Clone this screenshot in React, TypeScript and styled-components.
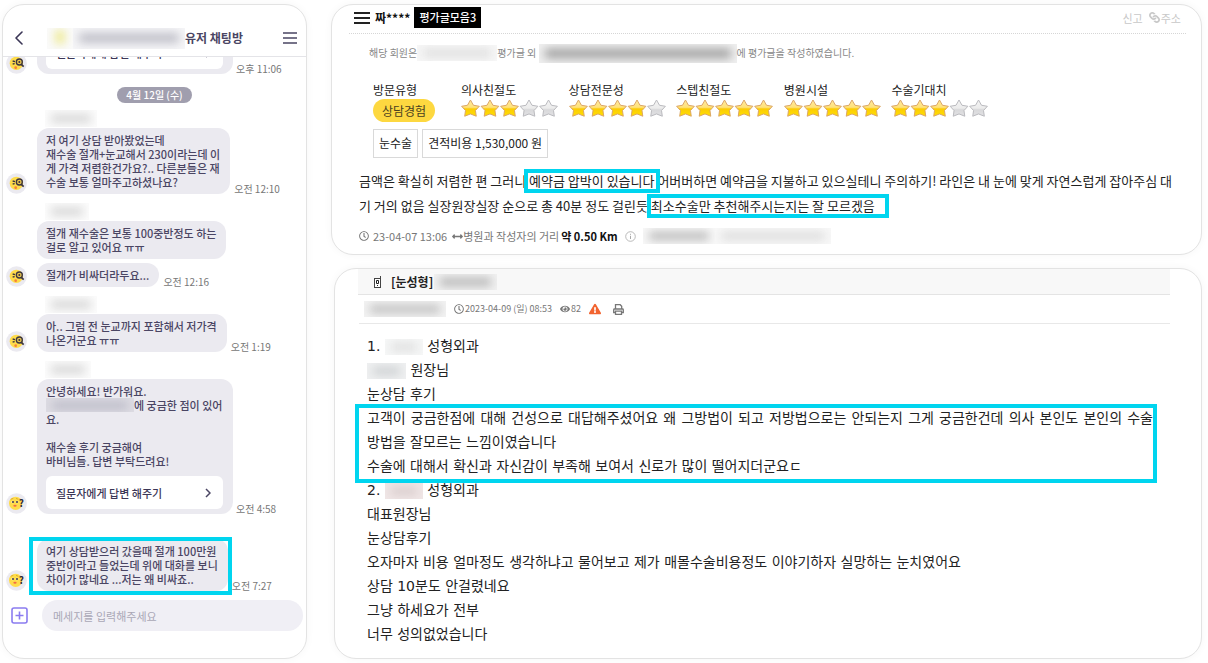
import React from "react";
import styled, { createGlobalStyle } from "styled-components";
import { FaArrowsAltH, FaExclamationTriangle, FaEye, FaLink, FaRegClock } from "react-icons/fa";

const GlobalStyle = createGlobalStyle`
  * { box-sizing: border-box; }
  body {
    margin: 0;
    background: #fff;
    font-family: "Noto Sans CJK KR", "Noto Sans", sans-serif;
    color: #222;
  }
  button { font-family: inherit; border: 0; padding: 0; background: none; cursor: pointer; }
  h1, h2, p { margin: 0; }
`;

const CYAN = "#00d5ef";

/* ---------- shared ---------- */

const Page = styled.main`
  display: grid;
  grid-template-columns: 305px minmax(0, 1fr);
  gap: 24px;
  min-height: 100vh;
  padding: 4px 6px 4px 2px;
`;

const Card = styled.section`
  background: #fff;
  border: 1px solid #e3e3e3;
  border-radius: 22px;
  box-shadow: 0 0 8px rgba(0, 0, 0, 0.04);
  overflow: hidden;
`;

const Redacted = styled.span<{ $w: number; $h?: number; $tone?: string; $bg?: string }>`
  display: inline-block;
  flex: none;
  width: ${(p) => p.$w}px;
  height: ${(p) => p.$h ?? 16}px;
  background: ${(p) => p.$bg ?? "#f7f7f7"};
  overflow: hidden;
  vertical-align: middle;
  &::before {
    content: "";
    display: block;
    height: 50%;
    margin: ${(p) => Math.round((p.$h ?? 16) / 4)}px 6px;
    background: ${(p) => p.$tone ?? "#ccc"};
    filter: blur(5px);
  }
`;

const Marked = styled.mark<{ $inset: string }>`
  position: relative;
  background: none;
  color: inherit;
  &::after {
    content: "";
    position: absolute;
    inset: ${(p) => p.$inset};
    border: 4px solid ${CYAN};
    pointer-events: none;
  }
`;

/* ---------- chat ---------- */

const ChatCard = styled(Card)`
  display: flex;
  flex-direction: column;
  color: #4a4563;
`;

const ChatHeader = styled.header`
  display: flex;
  align-items: center;
  height: 52px;
  flex: none;
  padding: 15px 9px 0 12px;
  border-bottom: 1px solid #e4e4e8;
`;

const IconButton = styled.button`
  display: flex;
  flex: none;
`;

const RoomName = styled.h1`
  display: flex;
  align-items: center;
  flex: 1;
  margin-left: 24px;
  font-size: 12px;
  line-height: 20px;
  font-weight: 700;
`;

const RoomPhoto = styled.span`
  display: flex;
  width: 26px;
  height: 21px;
  background: #fafafa;
  overflow: hidden;
  &::before {
    content: "";
    width: 12px;
    height: 14px;
    margin: 2px 8px;
    background: #efeb9c;
    filter: blur(4px);
  }
`;

const Messages = styled.div`
  display: flex;
  flex-direction: column;
  justify-content: flex-end;
  flex: 1 1 0;
  min-height: 0;
  overflow: hidden;
  padding: 0 3px 5px;
`;

const MessageRow = styled.div<{ $gap?: number }>`
  display: flex;
  align-items: flex-end;
  flex: none;
  margin-top: ${(p) => p.$gap ?? 9}px;
`;

const AvatarSvg = styled.svg`
  flex: none;
  width: 21px;
  height: 21px;
  margin-right: 10px;
`;

const BubbleStack = styled.div<{ $indent?: boolean }>`
  display: flex;
  flex-direction: column;
  align-items: flex-start;
  max-width: 195px;
  margin-left: ${(p) => (p.$indent ? 31 : 0)}px;
`;

const SenderName = styled.div`
  height: 17px;
  margin: 0 0 1px 8px;
  line-height: 0;
`;

const Bubble = styled.div`
  padding: 5px 10px 5px 9px;
  border-radius: 12px;
  background: #ebeaf0;
  font-size: 11px;
  line-height: 14px;
  font-weight: 500;
  white-space: pre-line;
`;

const InlineRedacted = styled(Redacted)`
  vertical-align: top;
`;

const ReplyButton = styled.button`
  display: flex;
  align-items: center;
  justify-content: space-between;
  width: 177px;
  height: 33px;
  margin-top: 8px;
  padding: 0 12px 0 10px;
  border-radius: 6px;
  background: #fff;
  color: #3b3656;
  font-size: 11px;
  font-weight: 500;
`;

const Time = styled.time`
  margin-left: 4px;
  color: #777;
  font-size: 10px;
  line-height: 10px;
  white-space: nowrap;
`;

const DatePill = styled.div`
  align-self: center;
  flex: none;
  margin: 13px 0 -2px;
  padding: 0 9px;
  border-radius: 8px;
  background: #a09eae;
  color: #fff;
  font-size: 10px;
  line-height: 16px;
  font-weight: 500;
`;

const Composer = styled.form`
  display: flex;
  align-items: center;
  gap: 14px;
  flex: none;
  padding: 4px 3px 27px 8px;
`;

const MessageInput = styled.input`
  flex: 1;
  min-width: 0;
  height: 31px;
  padding: 0 11px;
  border: 0;
  border-radius: 16px;
  background: #f0eff5;
  font-family: inherit;
  font-size: 11px;
  &::placeholder { color: #a9a7b5; opacity: 1; }
`;

function SearchAvatar() {
  return (
    <AvatarSvg viewBox="0 0 63 63" aria-hidden="true">
      <circle cx="31.500" cy="31.500" r="31" fill="#ebeaf0" />
      <circle cx="31" cy="31" r="20" fill="#ffdc4a" />
      <path d="M20 24l7 2M20 33l6-1" stroke="#3c3640" strokeWidth="4" />
      <circle cx="40" cy="27" r="9" fill="#e9c64c" stroke="#3c3640" strokeWidth="4" />
      <circle cx="40" cy="27" r="3" fill="#3c3640" />
      <path d="M46 34l7 7" stroke="#3c3640" strokeWidth="5" />
      <circle cx="29" cy="44" r="4" fill="#f6813c" />
    </AvatarSvg>
  );
}

function QuestionAvatar() {
  return (
    <AvatarSvg viewBox="0 0 63 63" aria-hidden="true">
      <circle cx="31.500" cy="31.500" r="31" fill="#ebeaf0" />
      <circle cx="29" cy="31" r="20" fill="#ffdc4a" />
      <circle cx="20" cy="27" r="4" fill="#fff3c0" />
      <circle cx="33" cy="27" r="4" fill="#fff3c0" />
      <circle cx="21" cy="27" r="3" fill="#3c3640" />
      <circle cx="33" cy="27" r="3" fill="#3c3640" />
      <path d="M14 19l8-3M30 16l7 3" stroke="#c79422" strokeWidth="2" />
      <ellipse cx="27" cy="38" rx="5" ry="3" fill="#f36d45" />
      <text x="38" y="41" fontSize="30" fontWeight="700" fill="#2f2b3a">?</text>
    </AvatarSvg>
  );
}

function ReplyPrompt() {
  return (
    <ReplyButton type="button">
      질문자에게 답변 해주기
      <svg width="6" height="10" viewBox="0 0 6 10" fill="none" stroke="#4a4563" strokeWidth="1.500">
        <path d="M1 1l4 4-4 4" />
      </svg>
    </ReplyButton>
  );
}

function Sender({ width }: { width: number }) {
  return (
    <SenderName>
      <Redacted $w={width} $h={17} $bg="#fcfcfc" $tone="#d8d8d8" />
    </SenderName>
  );
}

function ChatRoom() {
  return (
    <ChatCard>
      <ChatHeader>
        <IconButton type="button" aria-label="뒤로">
          <svg width="8" height="14" viewBox="0 0 8 14" fill="none" stroke="#3b3656" strokeWidth="1.600" strokeLinecap="round" strokeLinejoin="round">
            <path d="M7 1L1 7l6 6" />
          </svg>
        </IconButton>
        <RoomName>
          <RoomPhoto />
          <Redacted $w={112} $h={21} $bg="#f6f6f8" $tone="#bfbfc8" />
          유저 채팅방
        </RoomName>
        <IconButton type="button" aria-label="메뉴">
          <svg width="14" height="14" viewBox="0 0 14 14" stroke="#4a4563" strokeWidth="1.600">
            <path d="M0 2h14M0 7h14M0 12h14" />
          </svg>
        </IconButton>
      </ChatHeader>

      <Messages>
        <MessageRow>
          <SearchAvatar />
          <BubbleStack>
            <Bubble>
              <ReplyPrompt />
            </Bubble>
          </BubbleStack>
          <Time>오후 11:06</Time>
        </MessageRow>

        <DatePill>4월 12일 (수)</DatePill>

        <MessageRow>
          <SearchAvatar />
          <BubbleStack>
            <Sender width={52} />
            <Bubble>{"저 여기 상담 받아봤었는데\n재수술 절개+눈교해서 230이라는데 이\n게 가격 저렴한건가요?.. 다른분들은 재\n수술 보통 얼마주고하셨나요?"}</Bubble>
          </BubbleStack>
          <Time>오전 12:10</Time>
        </MessageRow>

        <MessageRow>
          <BubbleStack $indent>
            <Sender width={44} />
            <Bubble>{"절개 재수술은 보통 100중반정도 하는\n걸로 알고 있어요 ㅠㅠ"}</Bubble>
          </BubbleStack>
        </MessageRow>
        <MessageRow $gap={4}>
          <SearchAvatar />
          <BubbleStack>
            <Bubble>절개가 비싸더라두요...</Bubble>
          </BubbleStack>
          <Time>오전 12:16</Time>
        </MessageRow>

        <MessageRow>
          <SearchAvatar />
          <BubbleStack>
            <Sender width={52} />
            <Bubble>{"아.. 그럼 전 눈교까지 포함해서 저가격\n나온거군요 ㅠㅠ"}</Bubble>
          </BubbleStack>
          <Time>오전 1:19</Time>
        </MessageRow>

        <MessageRow>
          <QuestionAvatar />
          <BubbleStack>
            <Sender width={46} />
            <Bubble>
              {"안녕하세요! 반가워요.\n"}
              <InlineRedacted $w={88} $h={14} $bg="#dddce3" $tone="#b9b8c5" />
              {"에 궁금한 점이 있어\n요.\n\n재수술 후기 궁금해여\n바비님들. 답변 부탁드려요!"}
              <ReplyPrompt />
            </Bubble>
          </BubbleStack>
          <Time>오전 4:58</Time>
        </MessageRow>

        <MessageRow $gap={25}>
          <QuestionAvatar />
          <BubbleStack>
            <Marked $inset="-2px -4px -4px -8px">
              <Bubble>{"여기 상담받으러 갔을때 절개 100만원\n중반이라고 들었는데 위에 대화를 보니\n차이가 많네요 ...저는 왜 비싸죠.."}</Bubble>
            </Marked>
          </BubbleStack>
          <Time>오전 7:27</Time>
        </MessageRow>
      </Messages>

      <Composer>
        <IconButton type="button" aria-label="첨부">
          <svg width="17" height="17" viewBox="0 0 17 17" fill="none" stroke="#8b7cf0" strokeWidth="1.600">
            <rect x="1" y="1" width="15" height="15" rx="2" />
            <path d="M8.500 4.500v8M4.500 8.500h8" />
          </svg>
        </IconButton>
        <MessageInput aria-label="메세지" placeholder="메세지를 입력해주세요" />
      </Composer>
    </ChatCard>
  );
}

/* ---------- rating review ---------- */

const Reviews = styled.div`
  display: flex;
  flex-direction: column;
  gap: 13px;
  min-width: 0;
`;

const ReviewHeader = styled.header`
  display: flex;
  align-items: center;
  margin: 0 15px 0 17px;
  padding: 2px 5px 5px;
  border-bottom: 1px dotted #d6d6d6;
`;

const Nickname = styled.h2`
  margin: 0 4px 0 5px;
  font-size: 12px;
  line-height: 20px;
  font-weight: 700;
  color: #111;
`;

const CountBadge = styled.a`
  padding: 0 5px;
  background: #000;
  color: #fff;
  font-size: 11px;
  line-height: 21px;
  font-weight: 500;
  text-decoration: none;
`;

const HeaderLinks = styled.nav`
  display: flex;
  gap: 6px;
  margin-left: auto;
`;

const PaleLink = styled.a`
  display: flex;
  align-items: center;
  gap: 1px;
  color: #c8c8c8;
  font-size: 11px;
  line-height: 20px;
  text-decoration: none;
`;

const ChainIcon = styled(FaLink)`
  transform: rotate(90deg);
`;

const Notice = styled.p`
  display: flex;
  align-items: center;
  margin: 9px 22px 0 37px;
  color: #888;
  font-size: 10px;
  line-height: 20px;
  white-space: pre;
`;

const Facts = styled.div`
  display: grid;
  grid-template-columns: 88px minmax(0, 528px);
  margin: 19px 22px 0 41px;
`;

const FactLabel = styled.div`
  margin-bottom: 1px;
  font-size: 12px;
  line-height: 16px;
`;

const VisitType = styled.div`
  width: fit-content;
  padding: 0 9px;
  border-radius: 12px;
  background: #fdd840;
  color: #4a4020;
  font-size: 12px;
  line-height: 23px;
`;

const RatingGrid = styled.div`
  display: grid;
  grid-template-columns: repeat(5, minmax(0, 1fr));
  gap: 10px;
`;

const StarStrip = styled.svg`
  display: block;
  width: 100%;
`;

const Tags = styled.div`
  display: flex;
  gap: 4px;
  margin: 7px 22px 0 41px;
`;

const Tag = styled.span`
  padding: 0 5px 2px;
  border: 1px solid #d9d9d9;
  font-size: 12px;
  line-height: 25px;
`;

const ReviewText = styled.p`
  margin: 10px 22px 0 27px;
  font-size: 13px;
  line-height: 25px;
  word-break: break-all;
`;

const MetaRow = styled.div`
  display: flex;
  align-items: center;
  margin: 10px 22px 10px 27px;
  color: #777;
  font-size: 11px;
  line-height: 16px;
  & > time { margin: 0 5px 0 4px; }
  & > strong { margin: 0 7px 0 2px; color: #111; }
`;

const InfoIcon = styled.svg`
  margin-right: 7px;
`;

const STAR = "M9.500 1L12.500 6.300 18.400 7.300 14.500 11.600 15.300 17.300 9.500 15 3.700 17.300 4.500 11.600.6 7.300 6.500 6.300z";

function Stars({ value }: { value: number }) {
  return (
    <StarStrip viewBox="0 0 98 18" role="img" aria-label={`${value} / 5`}>
      <defs>
        <linearGradient id="gold" x1="0" y1="0" x2="0" y2="1">
          <stop offset="0" stopColor="#ffe9a0" />
          <stop offset="0.450" stopColor="#ffe27a" />
          <stop offset="0.550" stopColor="#fccb05" />
          <stop offset="1" stopColor="#ffe100" />
        </linearGradient>
        <linearGradient id="silver" x1="0" y1="0" x2="0" y2="1">
          <stop offset="0" stopColor="#f4f4f4" />
          <stop offset="0.500" stopColor="#ececec" />
          <stop offset="0.600" stopColor="#d8d8da" />
          <stop offset="1" stopColor="#e2e2e4" />
        </linearGradient>
      </defs>
      {[0, 1, 2, 3, 4].map((i) => (
        <path
          key={i}
          d={STAR}
          transform={`translate(${i * 19.6} 0)`}
          fill={i < value ? "url(#gold)" : "url(#silver)"}
          stroke={i < value ? "#dba566" : "#b9b9bd"}
          strokeWidth="1"
          strokeLinejoin="round"
        />
      ))}
    </StarStrip>
  );
}

const ratings = [
  { label: "의사친절도", value: 3 },
  { label: "상담전문성", value: 4 },
  { label: "스텝친절도", value: 5 },
  { label: "병원시설", value: 5 },
  { label: "수술기대치", value: 3 },
];

function RatingReview() {
  return (
    <Card>
      <ReviewHeader>
        <IconButton type="button" aria-label="목록">
          <svg width="16" height="12" viewBox="0 0 16 12" stroke="#222" strokeWidth="2">
            <path d="M0 1h16M0 6h16M0 11h16" />
          </svg>
        </IconButton>
        <Nickname>짜****</Nickname>
        <CountBadge href="#list">평가글모음3</CountBadge>
        <HeaderLinks>
          <PaleLink href="#report">신고</PaleLink>
          <PaleLink href="#address"><ChainIcon size={11} />주소</PaleLink>
        </HeaderLinks>
      </ReviewHeader>

      <Notice>
        해당 회원은
        <Redacted $w={80} $tone="#dedede" />
        {"평가글 외 "}
        <Redacted $w={198} $h={19} $bg="#f0f0f0" $tone="#9c9c9c" />
        에 평가글을 작성하였습니다.
      </Notice>

      <Facts>
        <div>
          <FactLabel>방문유형</FactLabel>
          <VisitType>상담경험</VisitType>
        </div>
        <RatingGrid>
          {ratings.map((r) => (
            <div key={r.label}>
              <FactLabel>{r.label}</FactLabel>
              <Stars value={r.value} />
            </div>
          ))}
        </RatingGrid>
      </Facts>

      <Tags>
        <Tag>눈수술</Tag>
        <Tag>견적비용 1,530,000 원</Tag>
      </Tags>

      <ReviewText>
        금액은 확실히 저렴한 편 그러니 <Marked $inset="-2px -6px -3px -5px">예약금 압박이 있습니다</Marked>{" "}
        어버버하면 예약금을 지불하고 있으실테니 주의하기! 라인은 내 눈에 맞게 자연스럽게 잡아주심 대기 거의 없음 실장원장실장
        순으로 총 40분 정도 걸린듯 <Marked $inset="-2px -14px -3px -4px">최소수술만 추천해주시는지는 잘 모르겠음</Marked>
      </ReviewText>

      <MetaRow>
        <FaRegClock size={10} />
        <time>23-04-07 13:06</time>
        <FaArrowsAltH size={11} />
        <span>병원과 작성자의 거리</span>
        <strong>약 0.50 Km</strong>
        <InfoIcon width="11" height="11" viewBox="0 0 11 11" fill="none" stroke="#aaa">
          <circle cx="5.500" cy="5.500" r="4.800" strokeWidth="0.800" />
          <path d="M5.500 4.800v3.200M5.500 2.800v1" />
        </InfoIcon>
        <Redacted $w={72} $bg="#f8f8f8" $tone="#b8b8b8" />
        <Redacted $w={116} $bg="#f8f8f8" $tone="#dcdcdc" />
      </MetaRow>
    </Card>
  );
}

/* ---------- board post ---------- */

const PostCard = styled(Card)`
  flex: 1;
  margin-left: 3px;
`;

const PostTitle = styled.header`
  display: flex;
  align-items: center;
  height: 26px;
  margin: 0 31px 0 23px;
  padding-left: 16px;
  border-bottom: 1px solid #e4e4e4;
  background: #f8f8f8;
`;

const PostHeading = styled.h2`
  margin: 0 1px 0 9px;
  font-size: 12px;
  line-height: 20px;
  font-weight: 700;
`;

const PostMeta = styled.div`
  display: flex;
  align-items: center;
  height: 29px;
  margin: 0 31px 0 24px;
  padding-left: 5px;
  border-bottom: 1px solid #e8e8e8;
  color: #777;
  font-size: 9px;
  line-height: 16px;
`;

const MetaItem = styled.span`
  display: flex;
  align-items: center;
  gap: 1px;
  margin-left: 8px;
`;

const PostBody = styled.article`
  padding: 10px 48px 12px 32px;
  color: #222;
  font-family: "DejaVu Sans", "Noto Sans CJK KR", sans-serif;
  font-size: 14px;
  line-height: 24px;
  word-break: keep-all;
`;

const MarkedBlock = styled(Marked)`
  display: block;
  text-align: justify;
`;

function BoardPost() {
  return (
    <PostCard>
      <PostTitle>
        <svg width="8" height="12" viewBox="0 0 8 12" fill="none" stroke="#444">
          <path d="M6.500 0v3" />
          <rect x="0.500" y="2.500" width="6" height="9" fill="#fff" />
          <path d="M2.500 4.500h2v3h-2zM3 9.500h1" stroke="#222" />
        </svg>
        <PostHeading>[눈성형]</PostHeading>
        <Redacted $w={63} $bg="#f1f1f1" $tone="#b4b4b4" />
      </PostTitle>
      <PostMeta>
        <Redacted $w={82} $bg="#f3f3f3" $tone="#bebebe" />
        <MetaItem><FaRegClock size={10} />2023-04-09 (일) 08:53</MetaItem>
        <MetaItem><FaEye size={10} />82</MetaItem>
        <MetaItem><FaExclamationTriangle size={12} color="#f26430" /></MetaItem>
        <MetaItem as="button" type="button" aria-label="인쇄">
          <svg width="19" height="11" viewBox="-4 0 19 11" fill="none" stroke="#777" strokeWidth="1.300">
            <path d="M2.500 5V.7h4.700l1.500 1.500V5" />
            <path d="M2.500 8.500H.7V5.800Q.7 5 1.500 5h8q.8 0 .8.8v2.700H8.500" />
            <path d="M2.500 7.200h6v3.100h-6z" />
          </svg>
        </MetaItem>
      </PostMeta>
      <PostBody>
        <p>1. <Redacted $w={38} $bg="#f6f7f7" $tone="#dedede" /> 성형외과</p>
        <p><Redacted $w={39} $bg="#eff0f1" $tone="#cdd0d2" /> 원장님</p>
        <p>눈상담 후기</p>
        <MarkedBlock $inset="-2px -4px -5px -12px">
          <p>
            고객이 궁금한점에 대해 건성으로 대답해주셨어요 왜 그방법이 되고 저방법으로는 안되는지 그게 궁금한건데 의사 본인도
            본인의 수술 방법을 잘모르는 느낌이였습니다
          </p>
          <p>수술에 대해서 확신과 자신감이 부족해 보여서 신로가 많이 떨어지더군요ㄷ</p>
        </MarkedBlock>
        <p>2. <Redacted $w={38} $bg="#f0e6e6" $tone="#d8cccc" /> 성형외과</p>
        <p>대표원장님</p>
        <p>눈상담후기</p>
        <p>오자마자 비용 얼마정도 생각하냐고 물어보고 제가 매몰수술비용정도 이야기하자 실망하는 눈치였어요</p>
        <p>상담 10분도 안걸렸네요</p>
        <p>그냥 하세요가 전부</p>
        <p>너무 성의없었습니다</p>
      </PostBody>
    </PostCard>
  );
}

export default function App() {
  return (
    <>
      <GlobalStyle />
      <Page>
        <ChatRoom />
        <Reviews>
          <RatingReview />
          <BoardPost />
        </Reviews>
      </Page>
    </>
  );
}
